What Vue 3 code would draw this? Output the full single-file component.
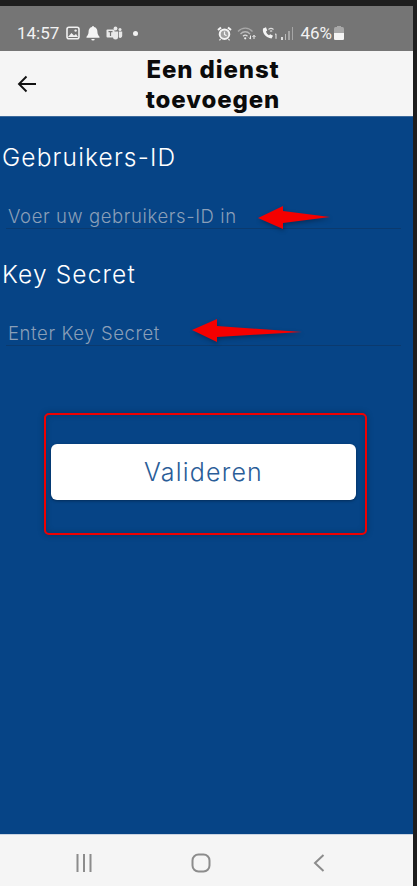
<template>
  <div class="screen">
    <div class="phone">
      <div class="topedge"></div>
      <div class="status">
        <span class="time">14:57</span>
        <svg class="ic" width="14" height="14" viewBox="0 0 14 14"><rect x="1" y="1.2" width="12" height="11.6" rx="2" fill="none" stroke="#f2f2f2" stroke-width="1.6"/><path d="M2 11l3.500-4 2.500 2.500 2-1.500 2 3z" fill="#f2f2f2"/><circle cx="9.600" cy="4.600" r="1.200" fill="#f2f2f2"/></svg>
        <svg class="ic" width="16" height="16" viewBox="0 0 16 16"><path d="M8 1a1 1 0 0 1 1 1c2.400.5 3.400 2.400 3.400 4.600 0 2.600.9 3.900 2.100 5.200v.9h-13v-.9C2.700 10.500 3.600 9.200 3.600 6.600 3.600 4.400 4.600 2.500 7 2a1 1 0 0 1 1-1z" fill="#f4f4f4"/><path d="M6.300 14h3.400a1.700 1.500 0 0 1-3.400 0z" fill="#f4f4f4"/></svg>
        <svg class="ic" width="17" height="14" viewBox="0 0 17 14"><circle cx="9.500" cy="2.500" r="1.900" fill="#e8e8e8"/><circle cx="14" cy="3.400" r="1.500" fill="#e8e8e8"/><path d="M7 5.500h5v5.500a2.500 2.500 0 0 1-5 0z" fill="#e8e8e8"/><path d="M12.800 5.500h3.400v4.500a2 2 0 0 1-3.400 1.300z" fill="#e8e8e8"/><rect x="0.500" y="3.500" width="8" height="8" rx="1" fill="#e8e8e8"/><path d="M2.500 5.600h4M4.500 5.600v4.400" stroke="#757575" stroke-width="1.200" fill="none"/></svg>
        <span class="dot"></span>
        <span class="grow"></span>
        <svg class="alarm" width="15" height="15" viewBox="0 0 15 15"><circle cx="7.500" cy="8.200" r="4.800" fill="#f4f4f4" fill-opacity=".35" stroke="#f4f4f4" stroke-width="2"/><path d="M7.500 5.500v3l2 1.200" stroke="#f4f4f4" stroke-width="1.200" fill="none"/><path d="M1 4l3-2.600M14 4l-3-2.600" stroke="#f4f4f4" stroke-width="2"/><path d="M3.500 13l-1 1.300M11.500 13l1 1.300" stroke="#f4f4f4" stroke-width="1.200"/></svg>
        <svg class="wifi" width="19" height="14" viewBox="0 0 19 14" fill="none"><path d="M1 5.500C5 1 11.500 1 15.500 5.500" stroke="#a8a8a8" stroke-width="1.300"/><path d="M3.500 8C6.200 5 10.300 5 13 8" stroke="#b8b8b8" stroke-width="1.300"/><path d="M6 10.300c1.500-1.500 3-1.500 4.500 0" stroke="#e0e0e0" stroke-width="1.300"/><circle cx="8.200" cy="12.300" r="1.100" fill="#eee"/><path d="M13.500 9.500v3.500M12 11.500l1.500 1.700M17 13V9.500M15.500 11l1.500-1.700 1.500 1.700" stroke="#eee" stroke-width="1"/></svg>
        <svg class="call" width="17" height="14" viewBox="0 0 17 14" fill="none"><path d="M2 2.500C1 7 5 12 10.500 12.500l1.500-2.800-2.800-1.500-1.200 1C6.500 8.500 5.300 7 5 5.500l1.200-1L5 1.200z" fill="#f4f4f4"/><path d="M7.500 3.500c1.500-1.300 3.500-1.300 5 0M9 5.300c.8-.6 1.500-.6 2.200 0" stroke="#ddd" stroke-width="1.100"/><path d="M14 8.500l1-.7v5" stroke="#e8e8e8" stroke-width="1"/></svg>
        <span class="bars"><i class="b1"></i><i class="b2"></i><i class="b3"></i><i class="b4"></i></span>
        <span class="pct">46%</span>
        <span class="batt"><i></i></span>
      </div>
      <header class="head">
        <svg class="back" width="20" height="18" viewBox="0 0 20 18" fill="none"><path d="M19 9H2M9.500 1.500 2 9l7.500 7.500" stroke="#111" stroke-width="1.900"/></svg>
        <h1>Een dienst<br>toevoegen</h1>
      </header>
      <main class="main">
        <label class="lbl">Gebruikers-ID</label>
        <div class="field">
          <span class="ph">Voer uw gebruikers-ID in</span>
          <svg class="arrow a1" width="74" height="26" viewBox="0 0 74 26"><path d="M0 13 25 1 25 6 72 12 25 18 25 24z" fill="#f50000"/></svg>
        </div>
        <label class="lbl second">Key Secret</label>
        <div class="field">
          <span class="ph">Enter Key Secret</span>
          <svg class="arrow a2" width="112" height="26" viewBox="0 0 112 26"><path d="M0 12 25 1 25 8 110 14 25 19 25 24z" fill="#f50000"/></svg>
        </div>
        <div class="mark">
          <button class="btn">Valideren</button>
        </div>
      </main>
      <nav class="nav">
        <svg width="18" height="18" viewBox="0 0 18 18" fill="none"><path d="M2.500 0v18M9 0v18M15.500 0v18" stroke="#8c8c8c" stroke-width="2"/></svg>
        <svg width="20" height="20" viewBox="0 0 20 20" fill="none"><rect x="1.500" y="1.500" width="17" height="17" rx="6" stroke="#8c8c8c" stroke-width="2"/></svg>
        <svg width="12" height="18" viewBox="0 0 12 18" fill="none"><path d="M10.500 1 2 9l8.500 8" stroke="#8c8c8c" stroke-width="2"/></svg>
      </nav>
    </div>
  </div>
</template>

<script setup>
</script>

<style>
html, body { margin: 0; background: #1e1e1e; }
</style>

<style scoped>
.screen {
  width: 417px;
  height: 886px;
  padding-right: 4px;
  box-sizing: border-box;
  background: #1e1e1e;
  font-family: "Inter", "Noto Sans", sans-serif;
  overflow: hidden;
}
.phone {
  height: 100%;
  display: flex;
  flex-direction: column;
}
.topedge { height: 6px; background: #1e1e1e; }
.status {
  height: 45px;
  box-sizing: border-box;
  background: #757575;
  display: flex;
  align-items: center;
  padding: 9px 0 0 17px;
  color: #f2f2f2;
}
.time { font-size: 17px; font-family: "Roboto", sans-serif; margin-right: 7px; }
.ic { flex: none; }
.status .ic + .ic { margin-left: 5px; }
.dot { width: 5px; height: 5px; border-radius: 50%; background: #f2f2f2; margin-left: 10px; }
.grow { flex: 1; }
.wifi { margin-left: 5px; }
.call { margin-left: 5px; }
.bars { display: flex; align-items: flex-end; gap: 2px; height: 13px; margin-left: 3px; }
.bars i { width: 1.500px; background: #a6a6a6; display: block; }
.b1 { height: 3px; background: #ddd !important; }
.b2 { height: 6px; background: #bbb !important; }
.b3 { height: 9px; }
.b4 { height: 13px; }
.pct { font-family: "Roboto", sans-serif; font-size: 17px; margin-left: 7px; }
.batt {
  width: 10px; height: 13px; margin: 0 69px 0 2px;
  position: relative;
  background: #a8a8a8;
  border-radius: 1.500px;
  display: block;
}
.batt i { display: block; position: absolute; left: 0; right: 0; bottom: 0; height: 7px; background: #f4f4f4; border-radius: 0 0 1.500px 1.500px; }
.batt::before { content: ""; position: absolute; left: 3px; right: 3px; top: -1px; height: 1px; background: #a8a8a8; }
.head {
  height: 65px;
  box-sizing: border-box;
  padding: 3px 0 0 13px;
  background: #f5f5f5;
  position: relative;
  display: flex;
  align-items: center;
  justify-content: center;
}
.back { position: absolute; left: 17px; top: 24px; }
h1 {
  margin: 0;
  font-size: 24px;
  line-height: 30px;
  font-weight: 800;
  text-align: center;
  color: #0b0b0b;
  letter-spacing: 0.900px;
}
.main {
  flex: 1;
  background: #064486;
  box-sizing: border-box;
  padding: 25px 0 0 2px;
  display: flex;
  flex-direction: column;
  border-top: 1px solid #3c6a9c;
}
.lbl {
  font-size: 24.500px;
  line-height: 30px;
  font-weight: 300;
  color: #fff;
  letter-spacing: 1.150px;
}
.second { margin-top: 30px; }
.field {
  position: relative;
  margin: 31px 0 0 4px;
  width: 395px;
  height: 26px;
  box-sizing: border-box;
  border-bottom: 1px solid #0b3a6e;
  padding: 2px 0 0 2px;
}
.ph {
  font-size: 18.500px;
  line-height: 23px;
  font-weight: 300;
  color: #8a9fb8;
  letter-spacing: 0.600px;
  display: block;
}
.arrow { position: absolute; filter: drop-shadow(1px 2px 2px rgba(0,0,0,.3)); }
.a1 { left: 252px; top: 2px; }
.a2 { left: 186px; top: -2px; }
.mark {
  align-self: flex-start;
  margin: 67px 0 0 42px;
  width: 323px;
  height: 122px;
  box-sizing: border-box;
  border: 2px solid #f00000;
  border-radius: 5px;
  box-shadow: 0 0 6px rgba(0,0,0,.25), inset 0 0 6px rgba(0,0,0,.18);
  padding: 29px 0 0 5px;
}
.btn {
  display: block;
  width: 305px;
  height: 56px;
  border: 0;
  border-radius: 6px;
  background: #fff;
  color: #2a5d98;
  font-family: inherit;
  font-size: 25px;
  font-weight: 300;
  letter-spacing: 1.200px;
  box-shadow: 0 1px 3px rgba(0,0,0,.35);
}
.nav {
  height: 52px;
  background: #f5f5f5;
  border-top: 1px solid #c9d4e2;
  box-sizing: border-box;
  padding-top: 4px;
  display: grid;
  grid-template-columns: 168px 66px 170px;
  align-items: center;
  justify-items: center;
}
</style>
